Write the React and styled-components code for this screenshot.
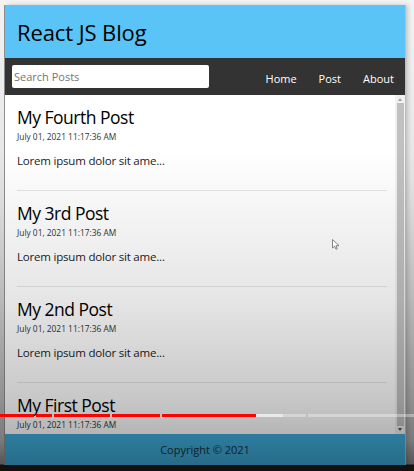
import React from "react";
import styled, { createGlobalStyle } from "styled-components";

const GlobalStyle = createGlobalStyle`
  * { box-sizing: border-box; }
  html, body { margin: 0; padding: 0; }
  body {
    width: 414px;
    height: 471px;
    overflow: hidden;
    font-family: "Open Sans", "Liberation Sans", sans-serif;
    background: linear-gradient(to bottom, #f2f2f2 0px, #e4e4e4 200px, #b0b0b0 440px, #8a8a8a 464px, #1c1c1c 465px, #1c1c1c 471px);
  }
`;

const Stage = styled.div`
  position: relative;
  width: 414px;
  height: 471px;
  padding: 5px 0 0 5px;
`;

const AppFrame = styled.div`
  width: 400px;
  height: 460px;
  display: flex;
  flex-direction: column;
  background: #fff;
  box-shadow: -1px 0 0 #8d8d8d, 1px 0 0 #bdbdbd, 3px 0 4px rgba(0, 0, 0, 0.18);
`;

const Header = styled.header`
  flex: 0 0 53px;
  display: flex;
  align-items: center;
  padding: 0 12px;
  background: #5ac4f7;
`;

const Title = styled.h1`
  margin: 0;
  font-size: 22px;
  font-weight: 400;
  color: #000;
  letter-spacing: -0.1px;
`;

const Nav = styled.nav`
  flex: 0 0 37px;
  display: flex;
  align-items: center;
  justify-content: space-between;
  padding: 0 11px 0 7px;
  background: #333;
`;

const SearchForm = styled.form`
  display: flex;
`;

const SearchInput = styled.input`
  width: 197px;
  height: 23px;
  border: none;
  border-radius: 2px;
  padding: 0 2px;
  font-family: inherit;
  font-size: 11px;
  color: #222;
  background: #fff;
  outline: none;
  &::placeholder { color: #767676; }
`;

const NavList = styled.ul`
  display: flex;
  gap: 22px;
  margin: 0;
  padding: 0;
  list-style: none;
`;

const NavLink = styled.a`
  color: #fff;
  font-size: 11px;
  text-decoration: none;
`;

const Body = styled.div`
  flex: 1 1 auto;
  min-height: 0;
  display: flex;
`;

const Main = styled.main`
  flex: 1 1 auto;
  overflow: hidden;
  padding: 0 8px 0 12px;
  background: #fff;
`;

const ScrollBar = styled.div`
  flex: 0 0 10px;
  display: flex;
  flex-direction: column;
  align-items: center;
  gap: 2px;
  padding: 3px 0 3px;
  background: #f1f1f1;
`;

const Arrow = styled.div`
  flex: 0 0 auto;
  width: 0;
  height: 0;
  border-left: 2.5px solid transparent;
  border-right: 2.5px solid transparent;
  ${(p) =>
    p.$down
      ? "border-top: 3px solid #505050;"
      : "border-bottom: 3px solid #a3a3a3;"}
`;

const Thumb = styled.div`
  flex: 1 1 auto;
  width: 7px;
  background: #c1c1c1;
`;

const Article = styled.article`
  padding: 11px 0 21px;
  border-bottom: 1px solid #e6e6e6;
`;

const PostTitle = styled.h2`
  margin: 0;
  font-size: 17.5px;
  line-height: 22px;
  font-weight: 400;
  letter-spacing: -0.5px;
  color: #000;
`;

const PostDate = styled.p`
  margin: 3px 0 0;
  font-size: 8.4px;
  line-height: 12px;
  color: #333;
`;

const PostBody = styled.p`
  margin: 10px 0 0;
  font-size: 11.5px;
  line-height: 16px;
  letter-spacing: -0.2px;
  color: #222;
`;

const Footer = styled.footer`
  flex: 0 0 31px;
  display: flex;
  align-items: center;
  justify-content: center;
  background: #3faedd;
  color: #16303e;
  font-size: 11px;
`;

const Shade = styled.div`
  position: absolute;
  inset: 0;
  pointer-events: none;
  background: linear-gradient(
    to bottom,
    rgba(0, 0, 0, 0) 0px,
    rgba(0, 0, 0, 0) 150px,
    rgba(0, 0, 0, 0.1) 300px,
    rgba(0, 0, 0, 0.22) 400px,
    rgba(0, 0, 0, 0.3) 440px,
    rgba(0, 0, 0, 0.38) 465px
  );
`;

const Progress = styled.div`
  position: absolute;
  left: 0;
  top: 414px;
  width: 414px;
  height: 3px;
  display: flex;
  gap: 2px;
  pointer-events: none;
`;

const Segment = styled.div`
  flex: 0 0 ${(p) => p.$w}px;
  display: flex;
  background: rgba(255, 255, 255, 0.35);
`;

const Fill = styled.div`
  background: ${(p) => (p.$buffer ? "rgba(235,235,235,0.95)" : "#f00")};
`;

const Cursor = styled.svg`
  position: absolute;
  left: 332px;
  top: 239px;
  pointer-events: none;
`;

const posts = [
  { id: 4, title: "My Fourth Post" },
  { id: 3, title: "My 3rd Post" },
  { id: 2, title: "My 2nd Post" },
  { id: 1, title: "My First Post" },
];

const segments = [
  { w: 34, red: 34, buf: 0 },
  { w: 16, red: 16, buf: 0 },
  { w: 56, red: 56, buf: 0 },
  { w: 48, red: 48, buf: 0 },
  { w: 144, red: 94, buf: 27 },
  { w: 106, red: 0, buf: 0 },
];

export default function App() {
  return (
    <>
      <GlobalStyle />
      <Stage>
        <AppFrame>
          <Header>
            <Title>React JS Blog</Title>
          </Header>
          <Nav>
            <SearchForm onSubmit={(e) => e.preventDefault()}>
              <SearchInput type="text" placeholder="Search Posts" />
            </SearchForm>
            <NavList>
              <li><NavLink href="#">Home</NavLink></li>
              <li><NavLink href="#">Post</NavLink></li>
              <li><NavLink href="#">About</NavLink></li>
            </NavList>
          </Nav>
          <Body>
            <Main>
              {posts.map((p) => (
                <Article key={p.id}>
                  <PostTitle>{p.title}</PostTitle>
                  <PostDate>July 01, 2021 11:17:36 AM</PostDate>
                  <PostBody>Lorem ipsum dolor sit ame...</PostBody>
                </Article>
              ))}
            </Main>
            <ScrollBar>
              <Arrow />
              <Thumb />
              <Arrow $down />
            </ScrollBar>
          </Body>
          <Footer>Copyright © 2021</Footer>
        </AppFrame>
        <Shade />
        <Progress>
          {segments.map((s, i) => (
            <Segment key={i} $w={s.w}>
              {s.red > 0 && <Fill style={{ width: s.red }} />}
              {s.buf > 0 && <Fill $buffer style={{ width: s.buf }} />}
            </Segment>
          ))}
        </Progress>
        <Cursor width="8" height="11" viewBox="0 0 8 11">
          <path d="M0.5 0.5 L0.5 9 L2.6 7.2 L4 10.3 L5.3 9.7 L4 6.8 L7 6.6 Z" fill="#fff" stroke="#666" strokeWidth="0.8" />
        </Cursor>
      </Stage>
    </>
  );
}
